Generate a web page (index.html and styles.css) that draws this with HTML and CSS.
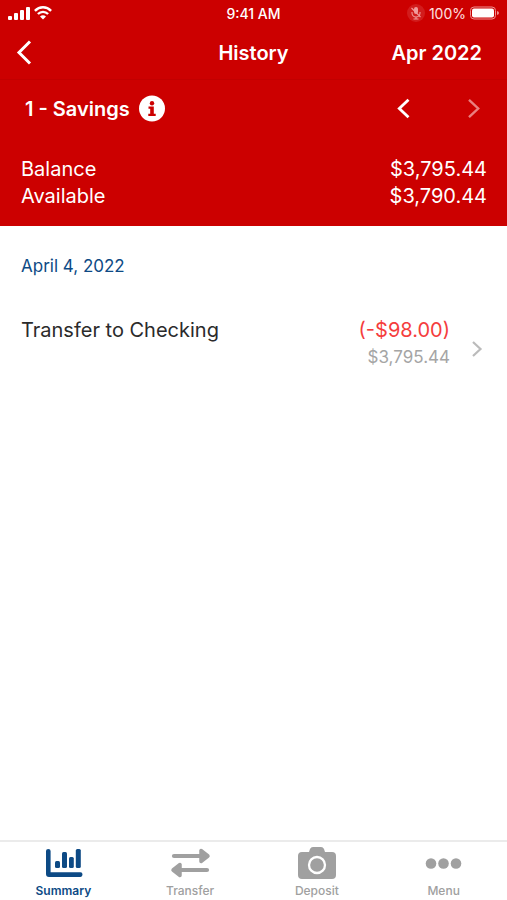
FILE: index.html
```html
<!DOCTYPE html>
<html lang="en">
<head>
<meta charset="utf-8">
<meta name="viewport" content="width=device-width, initial-scale=1">
<title>History</title>
<link rel="stylesheet" href="styles.css">
</head>
<body>
<div class="app">
  <div class="status">
    <div class="status-side">
      <svg width="22" height="14" viewBox="0 0 22 14" fill="#fff" aria-hidden="true"><rect x="0" y="10" width="4" height="4" rx="1"/><rect x="6" y="7" width="4" height="7" rx="1"/><rect x="12" y="4" width="4" height="10" rx="1"/><rect x="18" y="1" width="4" height="13" rx="1"/></svg>
      <svg width="18" height="14" viewBox="0 0 18 14" fill="none" stroke="#fff" stroke-width="2.4" aria-hidden="true"><path d="M.9 4.8C5.500 .1 12.500 .1 17.100 4.800M3.900 8C6.800 5.100 11.200 5.100 14.100 8"/><path d="M9 13.500 6 10.500Q9 8.200 12 10.500Z" fill="#fff" stroke="none"/></svg>
    </div>
    <span class="clock">9:41 AM</span>
    <div class="status-side status-end">
      <svg width="18" height="18" viewBox="0 0 18 18" fill="none" aria-hidden="true"><circle cx="9" cy="9" r="9" fill="#d21c1c"/><rect x="7" y="3" width="4" height="7" rx="2" fill="#f09a9a"/><path d="M5 8v1a4 4 0 0 0 8 0V8M9 13v2M6.500 15h5M4.500 4l9 9" stroke="#f09a9a" stroke-width="1.100"/></svg>
      <span class="percent">100%</span>
      <svg width="29" height="14" viewBox="0 0 29 14" aria-hidden="true"><rect x=".5" y="1" width="25" height="12" rx="3.500" fill="none" stroke="#ee9090"/><rect x="2" y="2.500" width="22" height="9" rx="2" fill="#fff"/><path d="M27 5q2 .5 2 2t-2 2z" fill="#ee9090"/></svg>
    </div>
  </div>
  <header class="nav">
    <button class="icon-button" aria-label="Back"><svg width="16" height="24" viewBox="0 0 16 24" fill="none" stroke="#fff" stroke-width="3"><path d="M14 .5 3 11.500l11 11"/></svg></button>
    <h1>History</h1>
    <button class="month">Apr 2022</button>
  </header>
  <section class="account">
    <div class="account-head">
      <h2>1 - Savings</h2>
      <button class="icon-button info" aria-label="Account information"><svg width="26" height="26" viewBox="0 0 26 26"><circle cx="13" cy="12.500" r="13" fill="#fff"/><circle cx="13" cy="7.300" r="2.200" fill="#c00"/><path d="M9.500 10.500h5.300v7.200h1.900v2.300H9.300v-2.300h1.900v-4.900H9.500z" fill="#c00"/></svg></button>
      <button class="icon-button previous" aria-label="Previous account"><svg width="14" height="20" viewBox="0 0 14 20" fill="none" stroke="#fff" stroke-width="2.800"><path d="M11.500 .8 2.300 9.500l9.200 8.700"/></svg></button>
      <button class="icon-button" aria-label="Next account" disabled><svg width="14" height="20" viewBox="0 0 14 20" fill="none" stroke="#ea8080" stroke-width="2.400"><path d="m2 .8 9.200 8.700L2 18.200"/></svg></button>
    </div>
    <dl>
      <div><dt>Balance</dt><dd>$3,795.44</dd></div>
      <div><dt>Available</dt><dd>$3,790.44</dd></div>
    </dl>
  </section>
  <main>
    <h3>April 4, 2022</h3>
    <a class="entry" href="#transaction">
      <span class="name">Transfer to Checking</span>
      <span class="amounts"><span class="amount">(-$98.00)</span><span class="running">$3,795.44</span></span>
      <svg width="12" height="16" viewBox="0 0 12 16" fill="none" stroke="#bbb" stroke-width="2.200" aria-hidden="true"><path d="m2 1 7.500 7L2 15"/></svg>
    </a>
  </main>
  <nav class="tabs">
    <a class="active" href="#summary">
      <svg width="38" height="32" viewBox="0 0 38 32" fill="currentColor"><path d="M2 4q0-2 2.300-2t2.300 2v21.200H36.500q2 0 2 2.400t-2 2.400H5q-3 0-3-3z"/><rect x="11" y="14" width="5" height="7" rx="1.500"/><rect x="18" y="5" width="5" height="16" rx="1.500"/><rect x="25" y="10" width="4.800" height="11" rx="1.500"/><rect x="31.800" y="2" width="5" height="19" rx="1.500"/></svg>
      <span>Summary</span>
    </a>
    <a href="#transfer">
      <svg width="38" height="32" viewBox="0 0 38 32" fill="currentColor" stroke="currentColor" stroke-linecap="round" stroke-linejoin="round"><path d="M3 9h26M36 23H10" stroke-width="4.200"/><path d="M30 3.500v11l7-5.500zM9 17.500v11L2 23z" stroke-width="3.500"/></svg>
      <span>Transfer</span>
    </a>
    <a href="#deposit">
      <svg width="38" height="32" viewBox="0 0 38 32"><path d="M4 5h7l1-3q.8-2 3-2h8q2.200 0 3 2l1 3h7q4 0 4 4v19q0 4-4 4H4q-4 0-4-4V9q0-4 4-4z" fill="currentColor"/><circle cx="19" cy="18" r="8" fill="none" stroke="#fff" stroke-width="2.300"/></svg>
      <span>Deposit</span>
    </a>
    <a href="#menu">
      <svg width="38" height="32" viewBox="0 0 38 32" fill="currentColor"><circle cx="6" cy="16.500" r="5.300"/><circle cx="18.500" cy="16.500" r="5.300"/><circle cx="31" cy="16.500" r="5.300"/></svg>
      <span>Menu</span>
    </a>
  </nav>
</div>
</body>
</html>
```
FILE: styles.css
```css
* { box-sizing: border-box; }
body, h1, h2, h3, dl, dd { margin: 0; }
body {
  background: #fff;
  color: #2b2b2b;
  font-family: Inter, "Liberation Sans", sans-serif;
}
svg { display: block; flex: none; overflow: visible; }
a { color: inherit; text-decoration: none; }
button {
  padding: 0;
  border: 0;
  background: none;
  color: inherit;
  font: inherit;
}
.app { display: flex; flex-direction: column; min-height: 100vh; }
.status, .nav {
  display: grid;
  grid-template-columns: 1fr auto 1fr;
  align-items: center;
  background: #c00;
  color: #fff;
}
.status { height: 26px; padding: 0 8px; font-size: 14px; }
.status-side { display: flex; align-items: center; gap: 4px; }
.status-end { justify-content: flex-end; }
.clock { font-weight: 500; }
.percent { color: #ffe0e0; }
.nav {
  height: 54px;
  padding: 0 16px;
  border-bottom: 1px solid #c20000;
}
.icon-button { display: flex; justify-self: start; }
h1, .month { font-size: 20px; font-weight: 600; line-height: 24px; }
.month { justify-self: end; margin-right: 9px; }
.account { padding: 16px 20px 16px 21px; background: #c00; color: #fff; }
.account-head { display: flex; align-items: center; height: 26px; padding: 0 6px 0 4px; }
h2 { font-size: 20px; font-weight: 600; line-height: 26px; }
.info { margin-left: 9px; }
.previous { margin: 0 56px 0 auto; }
dl { margin-top: 34px; font-size: 20px; line-height: 27px; }
dl div { display: flex; justify-content: space-between; }
main { flex: 1; padding: 28px 24px 0 21px; }
h3 { color: #0d4a85; font-size: 17px; font-weight: 400; line-height: 24px; }
.entry { display: flex; align-items: flex-end; margin-top: 38px; }
.entry svg { margin-bottom: 13px; }
.name { flex: 1; align-self: flex-start; font-size: 20px; line-height: 28px; }
.amounts { display: grid; margin-right: 21px; text-align: right; }
.amount { color: #f53d3d; font-size: 20px; line-height: 28px; }
.running { color: #a5a5a5; font-size: 17px; line-height: 26px; }
.tabs {
  display: grid;
  grid-template-columns: repeat(4, 1fr);
  height: 60px;
  border-top: 2px solid #ebebeb;
  color: #a0a0a0;
  font-size: 12px;
  font-weight: 500;
  line-height: 16px;
}
.tabs a { display: flex; flex-direction: column; align-items: center; gap: 4px; padding-top: 5px; }
.tabs .active { color: #0d4a85; font-weight: 600; }
```
